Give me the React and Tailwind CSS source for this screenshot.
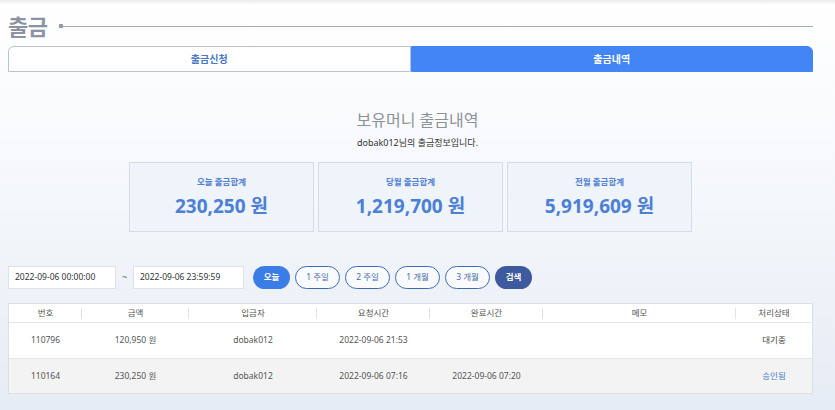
import React, { useState } from "react";

const font = { fontFamily: '"Noto Sans", "Noto Sans CJK KR", sans-serif' };

const stats = [
  { label: "오늘 출금합계", value: "230,250 원" },
  { label: "당월 출금합계", value: "1,219,700 원" },
  { label: "전월 출금합계", value: "5,919,609 원" },
];

const ranges = ["1 주일", "2 주일", "1 개월", "3 개월"];

const cols = [
  { name: "번호", w: "w-[73px]" },
  { name: "금액", w: "w-[107px]" },
  { name: "입금자", w: "w-[128px]" },
  { name: "요청시간", w: "w-[113px]" },
  { name: "완료시간", w: "w-[113px]" },
  { name: "메모", w: "w-[193px]" },
  { name: "처리상태", w: "flex-1" },
];

const rows = [
  { id: "110796", amount: "120,950 원", user: "dobak012", req: "2022-09-06 21:53", done: "", memo: "", status: "대기중", ok: false },
  { id: "110164", amount: "230,250 원", user: "dobak012", req: "2022-09-06 07:16", done: "2022-09-06 07:20", memo: "", status: "승인됨", ok: true },
];

export default function App() {
  const [tab, setTab] = useState(1);

  return (
    <div
      className="w-[835px] h-[410px] overflow-hidden bg-gradient-to-b from-white via-[#f4f7fb] to-[#e6ecf5]"
      style={font}
    >
      <div className="h-[5px] bg-gradient-to-b from-[#ececec] to-white" />

      {/* title */}
      <div className="flex items-center px-2 pt-[6px] h-[36px]">
        <h1 className="text-[22px] font-bold text-[#8b93a1] leading-none tracking-tight">출금</h1>
        <div className="flex items-center flex-1 ml-[12px] mr-[14px]">
          <span className="w-[4px] h-[4px] bg-[#8e98aa] rounded-[1px]" />
          <div className="flex-1 h-px bg-[#a3acbb]" />
        </div>
      </div>

      {/* tabs */}
      <div className="flex mx-2 mr-[22px] mt-[5px] h-[26px]">
        <button
          onClick={() => setTab(0)}
          className={`flex-1 text-[10px] font-bold rounded-tl-[6px] border ${tab === 0 ? "bg-[#4285f4] text-white border-[#4285f4]" : "bg-white text-[#4a78c9] border-[#b9c2d0]"}`}
        >
          출금신청
        </button>
        <button
          onClick={() => setTab(1)}
          className={`flex-1 text-[10px] font-bold rounded-tr-[6px] border ${tab === 1 ? "bg-[#4285f4] text-white border-[#4285f4]" : "bg-white text-[#4a78c9] border-[#b9c2d0]"}`}
        >
          출금내역
        </button>
      </div>

      {/* heading */}
      <div className="flex flex-col items-center mt-[40px]">
        <p className="text-[16px] text-[#8d9299] leading-none">보유머니 출금내역</p>
        <p className="text-[9px] text-[#333] mt-[10px] leading-none">dobak012님의 출금정보입니다.</p>
      </div>

      {/* stats */}
      <div className="flex justify-center gap-[4px] mt-[15px] pl-[8px] pr-[22px]">
        {stats.map((s) => (
          <div
            key={s.label}
            className="w-[185px] h-[70px] bg-[#eff3fa] border border-[#d5dce7] flex flex-col items-center justify-center"
          >
            <p className="text-[8.5px] font-bold text-[#4f80d3] leading-none">{s.label}</p>
            <p className="text-[19px] font-bold text-[#4c7fd6] leading-none mt-[10px]">{s.value}</p>
          </div>
        ))}
      </div>

      {/* filters */}
      <div className="flex items-center mt-[33px] px-2 h-[24px]">
        <div className="w-[108px] h-[23px] bg-white border border-[#dde2ea] flex items-center pl-[6px] text-[8.5px] text-[#333]">
          2022-09-06 00:00:00
        </div>
        <span className="w-[17px] text-center text-[9px] text-[#666]">~</span>
        <div className="w-[111px] h-[23px] bg-white border border-[#dde2ea] flex items-center pl-[6px] text-[8.5px] text-[#333]">
          2022-09-06 23:59:59
        </div>
        <button className="ml-[9px] w-[37px] h-[23px] rounded-full bg-[#3a7de6] text-white text-[8.5px] font-bold">
          오늘
        </button>
        {ranges.map((r) => (
          <button
            key={r}
            className="ml-[5px] w-[45px] h-[23px] rounded-full border border-[#3d6cb4] bg-white/60 text-[#4a6da6] text-[8.5px]"
          >
            {r}
          </button>
        ))}
        <button className="ml-[5px] w-[37px] h-[23px] rounded-full bg-[#3d5a9e] text-white text-[8.5px] font-bold">
          검색
        </button>
      </div>

      {/* table */}
      <div className="mx-2 mr-[22px] mt-[14px] border border-[#dcdfe4] bg-white">
        <div className="flex h-[19px] border-b border-[#e3e5e8]">
          {cols.map((c, i) => (
            <div
              key={c.name}
              className={`${c.w} relative flex items-center justify-center text-[8.5px] text-[#555]`}
            >
              {c.name}
              {i < cols.length - 1 && (
                <span className="absolute right-0 top-[4px] h-[11px] w-px bg-[#e0e3e8]" />
              )}
            </div>
          ))}
        </div>
        {rows.map((r, ri) => (
          <div
            key={r.id}
            className={`flex h-[35px] text-[8.5px] text-[#555] ${ri === 1 ? "bg-[#f3f3f3] border-t border-[#e3e5e8]" : "bg-white"}`}
          >
            <div className="w-[73px] flex items-center justify-center">{r.id}</div>
            <div className="w-[107px] flex items-center justify-center">{r.amount}</div>
            <div className="w-[128px] flex items-center justify-center">{r.user}</div>
            <div className="w-[113px] flex items-center justify-center">{r.req}</div>
            <div className="w-[113px] flex items-center justify-center">{r.done}</div>
            <div className="w-[193px] flex items-center justify-center">{r.memo}</div>
            <div className={`flex-1 flex items-center justify-center ${r.ok ? "text-[#4a7fd0]" : "text-[#444]"}`}>
              {r.status}
            </div>
          </div>
        ))}
      </div>
    </div>
  );
}
